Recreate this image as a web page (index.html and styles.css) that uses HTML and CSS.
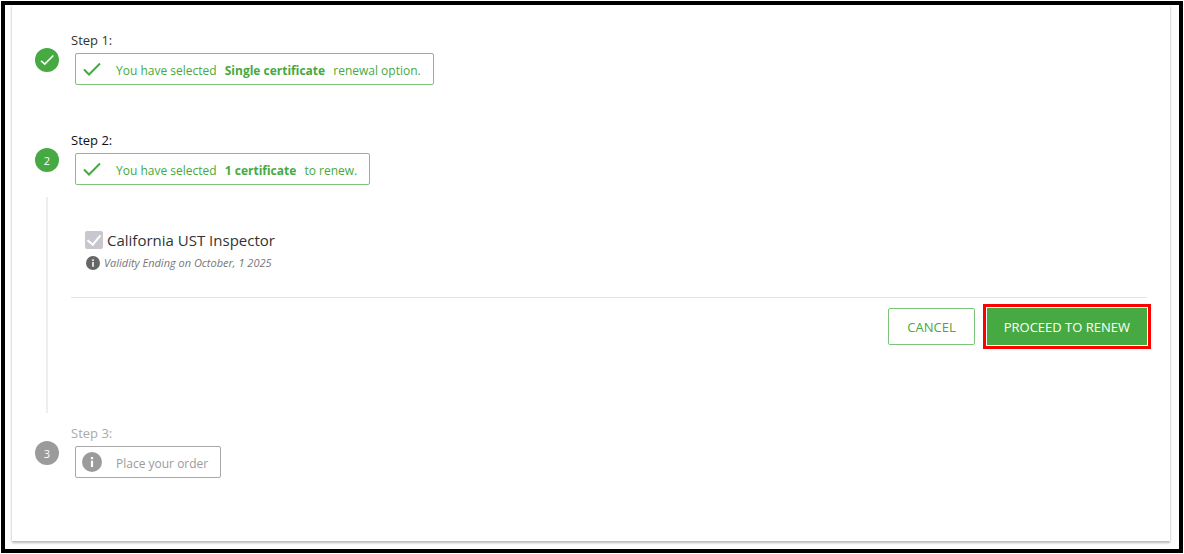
FILE: index.html
```html
<!DOCTYPE html>
<html lang="en">
<head>
<meta charset="utf-8">
<title>Certificate renewal</title>
<link rel="stylesheet" href="styles.css">
</head>
<body>
<main class="frame">
  <section class="card">
    <ol class="steps">
      <li class="step">
        <div class="rail">
          <span class="badge">
            <svg class="badge-icon" viewBox="0 0 24 24"><path d="M4 13l5 4.500L20.500 6" fill="none" stroke="currentColor" stroke-width="2.200"/></svg>
          </span>
        </div>
        <div class="content">
          <h2 class="label">Step 1:</h2>
          <div class="status">
            <svg class="status-icon" viewBox="0 0 20 20"><path d="M2 10.500L7 15.500L18 4.500" fill="none" stroke="currentColor" stroke-width="2"/></svg>
            <p class="status-text">You have selected <strong class="choice">Single certificate</strong> renewal option.</p>
          </div>
        </div>
      </li>
      <li class="step step-current">
        <div class="rail">
          <span class="badge">2</span>
          <span class="connector"></span>
        </div>
        <div class="content">
          <h2 class="label">Step 2:</h2>
          <div class="status">
            <svg class="status-icon" viewBox="0 0 20 20"><path d="M2 10.500L7 15.500L18 4.500" fill="none" stroke="currentColor" stroke-width="2"/></svg>
            <p class="status-text">You have selected <strong class="choice">1 certificate</strong> to renew.</p>
          </div>
          <div class="certificate">
            <div class="certificate-row">
              <input class="check" type="checkbox" id="ust" checked disabled>
              <label class="certificate-name" for="ust">California UST Inspector</label>
            </div>
            <p class="validity">
              <svg class="info-small" viewBox="0 0 20 20"><circle cx="10" cy="10" r="10" fill="currentColor"/><path d="M10 4.500v2.500M10 8.500v7" stroke="#fff" stroke-width="2.200"/></svg>
              Validity Ending on October, 1 2025
            </p>
          </div>
          <div class="actions">
            <button class="button" type="button">CANCEL</button>
            <button class="button button-primary" type="button">PROCEED TO RENEW</button>
          </div>
        </div>
      </li>
      <li class="step step-pending">
        <div class="rail">
          <span class="badge">3</span>
        </div>
        <div class="content">
          <h2 class="label">Step 3:</h2>
          <div class="status">
            <svg class="status-icon" viewBox="0 0 20 20"><circle cx="10" cy="10" r="10" fill="currentColor"/><path d="M10 5v2.200M10 8.800v6.200" stroke="#fff" stroke-width="2.200"/></svg>
            <p class="status-text">Place your order</p>
          </div>
        </div>
      </li>
    </ol>
  </section>
</main>
</body>
</html>
```

FILE: styles.css
```css
* {
  box-sizing: border-box;
}

body {
  margin: 0;
  background: #fff;
  color: #333;
  font-family: "Open Sans", "Noto Sans", sans-serif;
  font-size: 12px;
}

.frame {
  display: flex;
  min-height: calc(100vh - 2px);
  margin: 1px;
  padding: 0 9px 8px 7px;
  border: 4px solid #000;
  background: #fdfdfd;
}

.card {
  flex: 1;
  padding: 25px 23px 16px;
  background: #fff;
  box-shadow: 0 2px 2px #bbb, 0 0 2px #ddd;
  clip-path: inset(0 -4px -6px -4px);
}

.steps {
  margin: 0;
  padding: 0;
  list-style: none;
}

.step {
  --tone: #46a941;
  --line: #7cc47a;
  display: flex;
  gap: 12px;
  min-height: 100px;
}

.step-pending {
  --tone: #9b9b9b;
  --line: #a8a8a8;
  min-height: 0;
}

.rail {
  display: flex;
  flex-direction: column;
  align-items: center;
  width: 24px;
  padding-top: 18px;
}

.badge {
  display: flex;
  align-items: center;
  justify-content: center;
  width: 24px;
  height: 24px;
  border-radius: 50%;
  background: var(--tone);
  color: #fff;
  font-size: 11px;
}

.badge-icon {
  width: 18px;
  height: 18px;
}

.connector {
  flex: 1;
  width: 2px;
  margin: 25px 0 10px;
  background: #eee;
}

.content {
  flex: 1;
}

.label {
  margin: 0 0 3px;
  font-size: 13px;
  font-weight: 400;
  line-height: 20px;
}

.step-current .label {
  color: #111;
}

.step-pending .label {
  color: #aaa;
}

.status {
  display: inline-flex;
  align-items: center;
  gap: 14px;
  height: 32px;
  margin-left: 4px;
  padding: 0 12px 0 6px;
  border: 1px solid var(--line);
  border-radius: 2px;
  color: var(--tone);
  vertical-align: top;
}

.status-icon {
  width: 20px;
  height: 20px;
}

.status-text {
  margin: 0;
  padding-top: 3px;
}

.choice {
  margin: 0 5px;
}

.certificate {
  padding: 43px 0 25px 14px;
}

.certificate-row {
  display: flex;
  align-items: center;
  gap: 4px;
}

.check {
  display: grid;
  place-items: center;
  width: 18px;
  height: 18px;
  margin: 0;
  border-radius: 2px;
  background: #c8c7ce;
  appearance: none;
}

.check::before {
  width: 6px;
  height: 11px;
  margin-bottom: 3px;
  border: solid #fff;
  border-width: 0 2px 2px 0;
  content: "";
  transform: rotate(40deg);
}

.certificate-name {
  font-size: 15px;
  line-height: 24px;
}

.validity {
  display: flex;
  align-items: center;
  gap: 4px;
  margin: 2px 0 0 1px;
  color: #777;
  font-size: 11px;
  font-style: italic;
  line-height: 18px;
}

.info-small {
  width: 14px;
  height: 14px;
  color: #666;
}

.actions {
  display: flex;
  justify-content: flex-end;
  gap: 12px;
  padding: 10px 0 78px;
  border-top: 1px solid #e4e4e4;
}

.button {
  height: 37px;
  padding: 0 18px;
  border: 1px solid #7cc47a;
  border-radius: 2px;
  background: #fff;
  color: #46a941;
  font: inherit;
  font-size: 13px;
}

.button-primary {
  padding: 0 16px;
  border-color: #46a941;
  border-radius: 0;
  outline: 3px solid #f00;
  outline-offset: 1px;
  background: #46a941;
  color: #fff;
}
```
